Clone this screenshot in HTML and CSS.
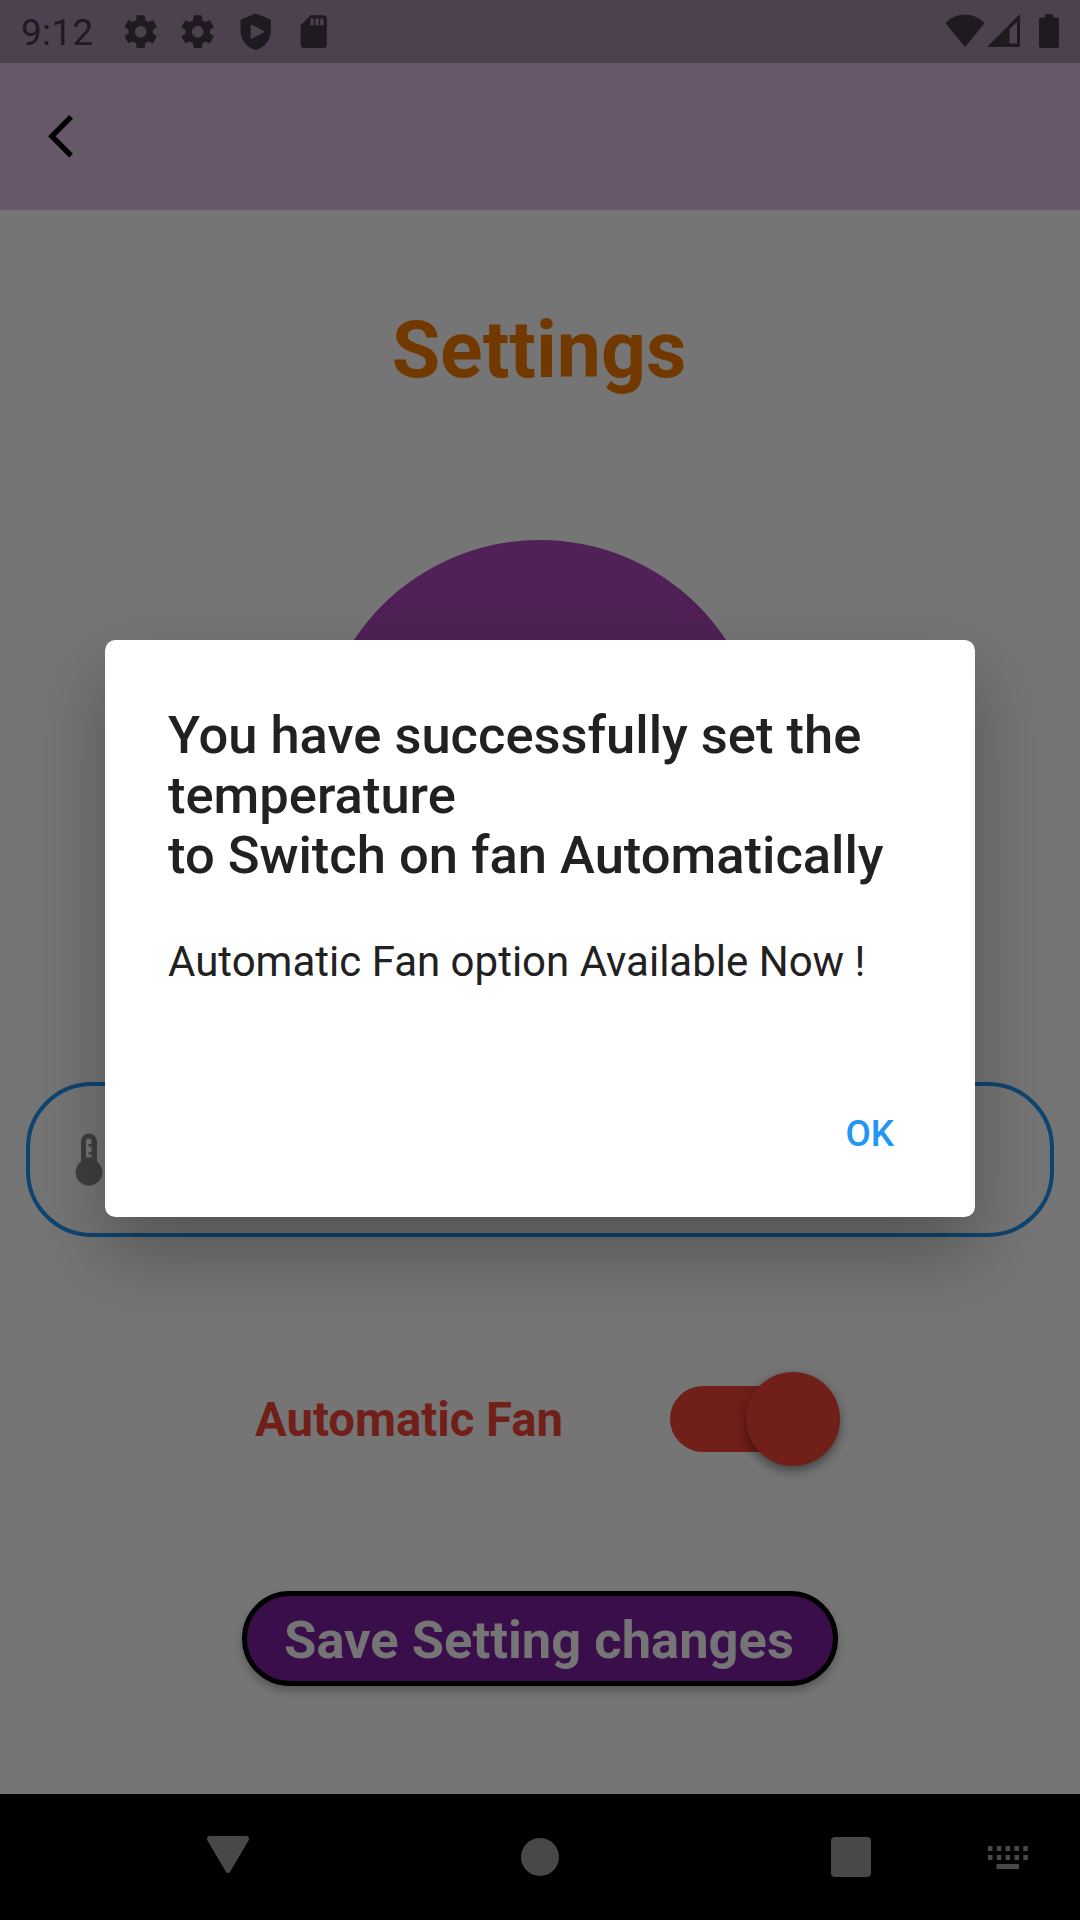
FILE: index.html
```html
<!DOCTYPE html>
<html lang="en">
<head>
<meta charset="utf-8">
<title>Settings</title>
<link rel="stylesheet" href="styles.css">
</head>
<body>
<div class="screen">
  <header class="status-bar">
    <span class="clock">9:12</span>
    <div class="notifications">
      <svg class="status-icon" viewBox="0 0 24 24"><path d="M19.43 12.98c.04-.32.07-.64.07-.98s-.03-.66-.07-.98l2.11-1.65c.19-.15.24-.42.12-.64l-2-3.46c-.12-.22-.39-.3-.61-.22l-2.49 1c-.52-.4-1.08-.73-1.69-.98l-.38-2.65A.488.488 0 0 0 14 2h-4c-.25 0-.46.18-.49.42l-.38 2.65c-.61.25-1.17.59-1.69.98l-2.49-1c-.23-.09-.49 0-.61.22l-2 3.46c-.13.22-.07.49.12.64l2.11 1.65c-.04.32-.07.65-.07.98s.03.66.07.98l-2.11 1.65c-.19.15-.24.42-.12.64l2 3.46c.12.22.39.3.61.22l2.49-1c.52.4 1.08.73 1.69.98l.38 2.65c.03.24.24.42.49.42h4c.25 0 .46-.18.49-.42l.38-2.65c.61-.25 1.17-.59 1.69-.98l2.49 1c.23.09.49 0 .61-.22l2-3.46c.12-.22.07-.49-.12-.64l-2.11-1.65zM12 15.5c-1.93 0-3.5-1.57-3.5-3.5s1.57-3.5 3.5-3.5 3.5 1.57 3.5 3.5-1.57 3.5-3.5 3.5z"/></svg>
      <svg class="status-icon" viewBox="0 0 24 24"><path d="M19.43 12.98c.04-.32.07-.64.07-.98s-.03-.66-.07-.98l2.11-1.65c.19-.15.24-.42.12-.64l-2-3.46c-.12-.22-.39-.3-.61-.22l-2.49 1c-.52-.4-1.08-.73-1.69-.98l-.38-2.65A.488.488 0 0 0 14 2h-4c-.25 0-.46.18-.49.42l-.38 2.65c-.61.25-1.17.59-1.69.98l-2.49-1c-.23-.09-.49 0-.61.22l-2 3.46c-.13.22-.07.49.12.64l2.11 1.65c-.04.32-.07.65-.07.98s.03.66.07.98l-2.11 1.65c-.19.15-.24.42-.12.64l2 3.46c.12.22.39.3.61.22l2.49-1c.52.4 1.08.73 1.69.98l.38 2.65c.03.24.24.42.49.42h4c.25 0 .46-.18.49-.42l.38-2.65c.61-.25 1.17-.59 1.69-.98l2.49 1c.23.09.49 0 .61-.22l2-3.46c.12-.22.07-.49-.12-.64l-2.11-1.65zM12 15.5c-1.93 0-3.5-1.57-3.5-3.5s1.57-3.5 3.5-3.5 3.5 1.57 3.5 3.5-1.57 3.5-3.5 3.5z"/></svg>
      <svg class="status-icon" viewBox="0 0 39 39"><path fill-rule="evenodd" d="M19.5 1.5 34.500 7.600V18.500C34.500 27.500 28.500 35 19.500 37.600 10.500 35 4.500 27.500 4.500 18.500V7.600ZM14.500 13.300V25.600Q15 26.800 16.300 26L27.300 20.400Q28.500 19.400 27.300 18.500L16.300 12.800Q15 12.200 14.500 13.300Z"/></svg>
      <svg class="status-icon" viewBox="0 0 24 24"><path d="M18 2h-8L4.020 8 4 20c0 1.100.9 2 2 2h12c1.100 0 2-.9 2-2V4c0-1.100-.9-2-2-2zm-6 6h-2V4h2v4zm3 0h-2V4h2v4zm3 0h-2V4h2v4z"/></svg>
    </div>
    <div class="indicators">
      <svg width="40" height="33" viewBox="0 0 40 33"><path d="M20 33 .5 9.200C5 4 12 .5 20 .5S35 4 39.500 9.200Z"/></svg>
      <svg width="33" height="33" viewBox="0 0 33 33"><path fill-rule="evenodd" d="M0 33 33 0V33ZM22.500 15V29.500H30V8Z"/></svg>
      <svg width="20" height="34" viewBox="0 0 20 34"><path d="M6 0h8v3.500h4q2 0 2 2V32q0 2-2 2H2q-2 0-2-2V5.500q0-2 2-2h4Z"/></svg>
    </div>
  </header>

  <nav class="app-bar">
    <svg class="back" viewBox="0 2.1 11.670 19.800"><path d="M11.670 3.870 9.900 2.100 0 12l9.900 9.900 1.770-1.770L3.540 12z"/></svg>
  </nav>

  <main class="content">
    <h1 class="page-title">Settings</h1>
    <div class="dial"></div>
    <div class="temperature-field">
      <svg width="28" height="54" viewBox="0 0 28 54"><path fill-rule="evenodd" d="M6 28.500V8.500a8 8 0 0 1 16 0V28.500a13.400 13.400 0 1 1-16 0ZM11 8.200V24.500H16.500V21.500H13.500V19.200H16.500V13.500H13.500V11H16.500V8.200a2.750 2.750 0 0 0-5.500 0Z"/></svg>
    </div>
    <div class="fan-row">
      <span class="fan-label">Automatic Fan</span>
      <div class="switch"><div class="thumb"></div></div>
    </div>
    <button class="save">Save Setting changes</button>
  </main>

  <footer class="nav-bar">
    <svg class="nav-back" width="42" height="37" viewBox="0 0 42 37"><path d="M2 0H40Q43 1 41.500 4.500L23 36Q21 38 19 36L.5 4.500Q-1 1 2 0Z"/></svg>
    <svg class="nav-home" width="38" height="38" viewBox="0 0 38 38"><circle cx="19" cy="19" r="19"/></svg>
    <svg class="nav-recents" width="40" height="40" viewBox="0 0 40 40"><rect width="40" height="40" rx="4"/></svg>
    <svg class="nav-keyboard" width="40" height="23" viewBox="0 0 40 23"><path d="M0 0h4.500v5H0zM8.800 0h4.500v5H8.800zM17.600 0h4.500v5h-4.500zM26.500 0H31v5h-4.500zM35.300 0h4.500v5h-4.500zM0 9h4.500v5H0zM8.800 9h4.500v5H8.800zM17.600 9h4.500v5h-4.500zM26.500 9H31v5h-4.500zM35.300 9h4.500v5h-4.500zM8.500 18H31v5H8.500z"/></svg>
  </footer>

  <div class="modal-layer">
    <section class="dialog" role="dialog">
      <h2 class="dialog-title">You have successfully set the temperature<br>to Switch on fan Automatically</h2>
      <p class="dialog-text">Automatic Fan option Available Now !</p>
      <div class="dialog-actions"><button class="ok">OK</button></div>
    </section>
  </div>
</div>
</body>
</html>
```
FILE: styles.css
```css
* { box-sizing: border-box; }

body {
  margin: 0;
  font-family: Roboto, sans-serif;
}

button {
  margin: 0;
  padding: 0;
  font-family: inherit;
}

svg { display: block; flex: none; }

.screen {
  position: relative;
  width: 1080px;
  height: 1920px;
  overflow: hidden;
  display: flex;
  flex-direction: column;
  background: #757575;
}

.status-bar {
  height: 63px;
  display: flex;
  background: #4d414f;
  color: #1f1a20;
  fill: #1f1a20;
}

.clock {
  width: 120.500px;
  padding-left: 21px;
  font-size: 36.75px;
  line-height: 66px;
  letter-spacing: .4px;
}

.notifications {
  display: flex;
  gap: 18.6px;
  padding-top: 12px;
}

.status-icon { width: 39.400px; height: 39.400px; }

.indicators {
  flex: 1;
  display: flex;
  justify-content: flex-end;
  padding: 14px 21px 0 0;
}

.indicators svg:nth-child(2) { margin: 0 19px 0 2px; }

.app-bar {
  height: 147px;
  display: flex;
  align-items: center;
  padding-left: 47.500px;
  background: #665769;
}

.back { width: 25px; height: 42.500px; }

.content {
  height: 1584px;
  display: flex;
  flex-direction: column;
  align-items: center;
}

.page-title {
  margin: 94px 2px 0 0;
  font-size: 78.75px;
  line-height: 92px;
  font-weight: 700;
  color: #713900;
}

.dial {
  width: 446px;
  height: 446px;
  margin-top: 144px;
  border-radius: 50%;
  background: #4f2156;
}

.temperature-field {
  width: 1028px;
  height: 155px;
  margin-top: 96px;
  padding-left: 45px;
  display: flex;
  align-items: center;
  border: 4px solid #0f4570;
  border-radius: 66px;
  fill: #3f3f3f;
}

.fan-row {
  width: 584px;
  height: 94px;
  margin-top: 135px;
  display: flex;
  align-items: center;
  justify-content: space-between;
}

.fan-label {
  margin-left: 7px;
  padding-top: 2px;
  font-size: 47.25px;
  font-weight: 700;
  color: #701f19;
}

.switch {
  width: 156px;
  height: 66px;
  margin-right: 6.500px;
  display: flex;
  align-items: center;
  justify-content: flex-end;
  border-radius: 33px;
  background: #701f19;
}

.thumb {
  width: 94px;
  height: 94px;
  flex: none;
  margin-right: -14px;
  border-radius: 50%;
  background: #701f19;
  box-shadow: 0 5px 9px rgba(0, 0, 0, .3), 0 3px 16px rgba(0, 0, 0, .15);
}

.save {
  width: 596px;
  height: 95px;
  margin-top: 124.500px;
  padding: 3px 2px 0 0;
  border: 5.250px solid #000;
  border-radius: 48px;
  background: #390e4b;
  color: #757575;
  font-size: 52.500px;
  font-weight: 700;
  box-shadow: 0 5px 8px rgba(0, 0, 0, .25);
}

.nav-bar {
  height: 126px;
  display: flex;
  align-items: center;
  background: #000;
  fill: #484848;
}

.nav-back { margin: 0 272px 5px 207px; }
.nav-recents { margin: 0 117px 0 272px; }

.modal-layer {
  position: absolute;
  inset: 0;
}

.dialog {
  width: 870px;
  height: 577.500px;
  margin: 639.500px auto 0;
  padding: 65px 63px 0;
  border-radius: 10.500px;
  background: #fff;
  color: #212121;
  box-shadow: 0 37px 74px rgba(0, 0, 0, .28);
}

.dialog-title {
  margin: 0;
  font-size: 52.500px;
  line-height: 60px;
  font-weight: 500;
}

.dialog-text {
  margin: 51px 0 0;
  font-size: 42px;
  line-height: 52px;
}

.dialog-actions {
  display: flex;
  justify-content: flex-end;
  margin-top: 122px;
}

.ok {
  margin-right: 18px;
  border: 0;
  background: none;
  color: #2196f3;
  font-size: 36.750px;
  line-height: 48px;
  font-weight: 500;
}
```
